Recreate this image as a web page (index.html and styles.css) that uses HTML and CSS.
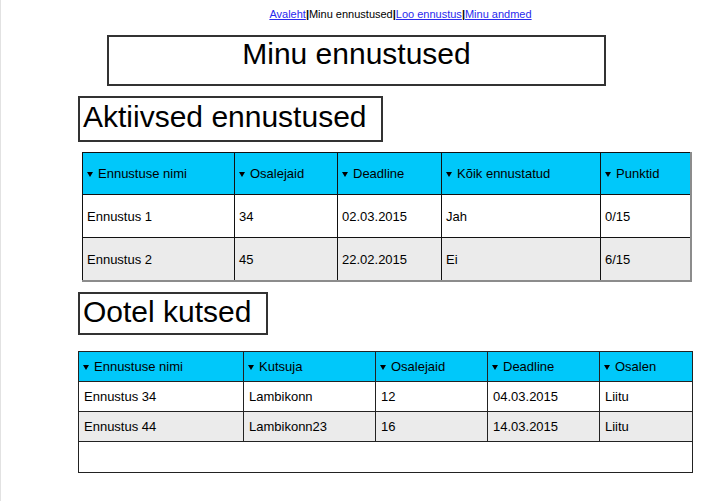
FILE: index.html
```html
<!DOCTYPE html>
<html lang="et">
<head>
<meta charset="utf-8">
<title>Minu ennustused</title>
<link rel="stylesheet" href="styles.css">
</head>
<body>
<div class="page">
  <nav class="nav">
    <a href="#">Avaleht</a><span class="sep">|</span><span class="current">Minu ennustused</span><span class="sep">|</span><a href="#">Loo ennustus</a><span class="sep">|</span><a href="#">Minu andmed</a>
  </nav>
  <h1 class="title">Minu ennustused</h1>
  <h2 class="section">Aktiivsed ennustused</h2>
  <table class="grid grid-active">
    <colgroup>
      <col class="a1"><col class="a2"><col class="a3"><col class="a4"><col class="a5">
    </colgroup>
    <thead>
      <tr>
        <th><span class="tri"></span>Ennustuse nimi</th>
        <th><span class="tri"></span>Osalejaid</th>
        <th><span class="tri"></span>Deadline</th>
        <th><span class="tri"></span>Kõik ennustatud</th>
        <th><span class="tri"></span>Punktid</th>
      </tr>
    </thead>
    <tbody>
      <tr>
        <td>Ennustus 1</td><td>34</td><td>02.03.2015</td><td>Jah</td><td>0/15</td>
      </tr>
      <tr class="alt">
        <td>Ennustus 2</td><td>45</td><td>22.02.2015</td><td>Ei</td><td>6/15</td>
      </tr>
    </tbody>
  </table>
  <h2 class="section section-invites">Ootel kutsed</h2>
  <table class="grid grid-invites">
    <colgroup>
      <col class="b1"><col class="b2"><col class="b3"><col class="b4"><col class="b5">
    </colgroup>
    <thead>
      <tr>
        <th><span class="tri"></span>Ennustuse nimi</th>
        <th><span class="tri"></span>Kutsuja</th>
        <th><span class="tri"></span>Osalejaid</th>
        <th><span class="tri"></span>Deadline</th>
        <th><span class="tri"></span>Osalen</th>
      </tr>
    </thead>
    <tbody>
      <tr>
        <td>Ennustus 34</td><td>Lambikonn</td><td>12</td><td>04.03.2015</td><td>Liitu</td>
      </tr>
      <tr class="alt">
        <td>Ennustus 44</td><td>Lambikonn23</td><td>16</td><td>14.03.2015</td><td>Liitu</td>
      </tr>
      <tr class="empty">
        <td colspan="5"></td>
      </tr>
    </tbody>
  </table>
</div>
</body>
</html>
```
FILE: styles.css
```css
html, body {
  margin: 0;
  padding: 0;
  background: #fff;
}

body {
  font-family: "Liberation Sans", Arial, sans-serif;
  color: #000;
}

.page {
  border-left: 1px solid #e2e2e2;
  min-height: 501px;
  box-sizing: border-box;
  padding-top: 8px;
  padding-bottom: 20px;
}

.nav {
  font-size: 11px;
  line-height: 13px;
  height: 13px;
  text-align: center;
  padding-left: 81px;
}

.nav a {
  color: #2a2aee;
  text-decoration: underline;
}

.nav .sep {
  font-weight: bold;
  margin: 0;
}

.title {
  margin: 14px 0 0 106px;
  width: 495px;
  height: 47px;
  border: 2px solid #333;
  font-size: 30px;
  font-weight: normal;
  line-height: 34px;
  text-align: center;
  box-sizing: content-box;
  padding: 0;
}

.section {
  margin: 10px 0 0 77px;
  width: fit-content;
  border: 2px solid #333;
  font-size: 30px;
  font-weight: normal;
  line-height: 34px;
  padding: 2px 14px 6px 3px;
}

.section-invites {
  margin-top: 10px;
  padding: 1px 15px 4px 3px;
}

.grid {
  border-collapse: collapse;
  table-layout: fixed;
  font-size: 13px;
  border-top: 1px solid #333;
  border-left: 1px solid #333;
  border-right: 2px solid #8c8c8c;
  border-bottom: 2px solid #8c8c8c;
}

.grid th,
.grid td {
  border: 1px solid #111;
  text-align: left;
  font-weight: normal;
  padding: 0 0 0 4px;
  vertical-align: middle;
  white-space: nowrap;
}

.grid th {
  background: #00c8fa;
}

.grid tr.alt td {
  background: #ebebeb;
}

.tri {
  display: inline-block;
  width: 0;
  height: 0;
  border-left: 3px solid transparent;
  border-right: 3px solid transparent;
  border-top: 5px solid #000;
  margin-right: 5px;
  vertical-align: 1px;
}

/* Active predictions table */
.grid-active {
  margin: 10px 0 0 81px;
  width: 608px;
}

.grid-active th { height: 41px; }
.grid-active td { height: 42px; }

.a1 { width: 152px; }
.a2 { width: 103px; }
.a3 { width: 104px; }
.a4 { width: 159px; }
.a5 { width: 90px; }

/* Invites table */
.grid-invites {
  margin: 16px 0 0 77px;
  width: 614px;
  border: 1px solid #333;
}

.grid-invites th,
.grid-invites td {
  border-color: #222;
  padding-left: 5px;
}

.grid-invites th { height: 29px; padding-left: 4px; }
.grid-invites td { height: 29px; }
.grid-invites tr.empty td { height: 30px; }

.b1 { width: 165px; }
.b2 { width: 132px; }
.b3 { width: 112px; }
.b4 { width: 112px; }
.b5 { width: 93px; }
```
